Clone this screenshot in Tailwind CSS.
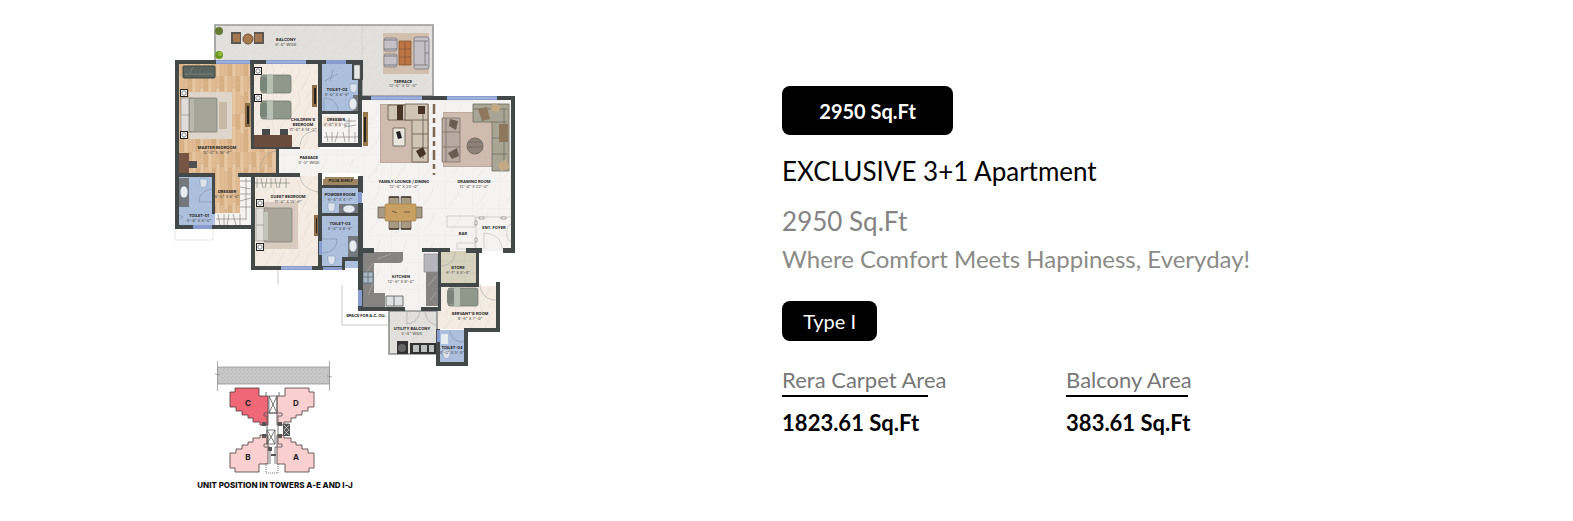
<!DOCTYPE html>
<html lang="en">
<head>
<meta charset="utf-8">
<meta name="viewport" content="width=device-width, initial-scale=1">
<title>Exclusive 3+1 Apartment</title>
<script src="https://cdn.jsdelivr.net/npm/@tailwindcss/browser@4"></script>
</head>
<body class="bg-white font-['Lato',sans-serif] text-black">
<main class="grid grid-cols-[44%_1fr]">
<figure class="flex justify-center pt-[15px] pr-0.5 pb-6">
<svg class="w-[360px] max-w-full h-auto font-['Inter',sans-serif]" viewBox="165 15 360 480" role="img" aria-label="Floor plan of the 3+1 apartment">
<defs>
<pattern id="wood" width="16" height="38" patternUnits="userSpaceOnUse"><path fill="#e0bb93" d="M0 0h16v38H0z"/><path fill="#e8c7a3" d="M0 0h4v20H0zM8 12h4v26H8z"/><path fill="#d8b084" d="M4 16h4v22H4zM12 0h4v15h-4z"/><path stroke="#d0a67b" stroke-width=".4" d="M0 0v38M4 0v38M8 0v38M12 0v38M0 20h4M8 12h4M4 16h4M12 15h4"/></pattern>
<pattern id="cream" width="26" height="30" patternUnits="userSpaceOnUse"><path fill="#f4ebe2" d="M0 0h26v30H0z"/><path stroke="#ebdfd3" fill="none" stroke-width=".8" d="M2 30 14 12 12 0M16 30l8-18M20 8l6-8M4 14l4-8"/></pattern>
<pattern id="marble" x="364" y="100" width="27" height="27" patternUnits="userSpaceOnUse"><path fill="#f4f3f1" d="M0 0h27v27H0z"/><path stroke="#e3e2df" fill="none" stroke-width=".5" d="M0 0h27M0 0v27M4 25l9-11 3-9"/></pattern>
<pattern id="stone" width="20" height="18" patternUnits="userSpaceOnUse"><path fill="#e2e0dc" d="M0 0h20v18H0z"/><path stroke="#dbd9d4" fill="none" stroke-width=".8" d="m2 14 6-7 5-3M12 17l6-6"/></pattern>
<pattern id="blue" width="12" height="12" patternUnits="userSpaceOnUse"><path fill="#acc0dd" d="M0 0h12v12H0z"/><path stroke="#a1b7d8" fill="none" stroke-width=".6" d="m1 9 4-4 5-2M7 12l4-4"/></pattern>
<pattern id="road" width="4" height="4" patternUnits="userSpaceOnUse"><path fill="#c8c8c8" d="M0 0h4v4H0z"/><path fill="#bcbcbc" d="M0 0h1v1H0zM2 2h1v1H2zM3 1h1v1H3z"/></pattern>
<g id="sidebed"><rect x="0" y="0" width="30" height="18" rx="2" fill="#8f988b" stroke="#69706a" stroke-width=".7"/><rect x="-1" y="2" width="7" height="14" rx="2" fill="#7b867b"/><path fill="#b7c1b3" d="M6-1h6v20H6z"/></g>
<g id="lamp"><path fill="#222" d="M0 0h8v8H0z"/><path fill="#fff" d="M1 1h6v6H1z"/><circle cx="4" cy="4" r="2.2" fill="#fff" stroke="#555" stroke-width=".7"/></g>
<g id="wc"><path fill="#dce5ee" stroke="#8195ae" stroke-width=".5" d="M0 0h7v4c0 6-7 6-7 0z"/></g>
<g id="chair"><path fill="#a89b86" stroke="#5c5040" stroke-width=".7" d="M0 0h10v8H0z"/><path stroke="#45392c" stroke-width="1.5" d="M0 0h10"/></g>
<g id="seat"><rect width="13" height="13" rx="2" fill="#c4c1c6" stroke="#77747a" stroke-width=".7"/><path stroke="#77747a" stroke-width=".9" d="M0 2h13M0 11h13"/></g>
</defs>

<!-- floors -->
<path fill="url(#stone)" stroke="#969898" stroke-width="1.6" d="M215 25h218v71h-71V62H215z"/>
<path stroke="#bdbbb7" stroke-width=".5" stroke-dasharray="1 1" d="M362 26v36"/>
<path fill="url(#wood)" d="M177 62h76v86h25v27h-37v38h-27v-38h-37z"/>
<path fill="url(#cream)" d="M253 62h67v114h-67z"/><path fill="url(#cream)" d="M253 175h67v93h-67z"/>
<path fill="url(#marble)" d="M278 149h84v24h-42v3h-41z"/><path fill="url(#marble)" d="M360 98h153v153H360z"/>
<path fill="url(#wood)" d="M253 149h25v24h-25z"/>
<path fill="url(#blue)" d="M177 175h38v52h-38zM320 62h40v52h-40zM320 187h41v81h-41zM439 330h27v34h-27z"/>
<path fill="#f5f4f2" d="M215 213h25v-38h13v52h-38zM320 114h40v31h-40z"/>
<path fill="#f0e5da" d="M323 116h18v11h-18z"/>
<path fill="url(#marble)" d="M360 251h80v59h-80z"/>
<path fill="#d6d2bd" d="M440 251h37v34h-37z"/><path stroke="#c9c5b0" stroke-width=".4" d="M440 261h37M440 273h37M452 251v34M465 251v34"/>
<path fill="url(#cream)" d="M438 286h60v43h-60z"/>
<path fill="url(#stone)" stroke="#8e9090" stroke-width="1.6" d="M389 311h48v43h-48z"/>

<!-- balcony and terrace furniture -->
<g fill="#6b9a22"><circle cx="219" cy="31" r="4" fill="#667a33"/><circle cx="219" cy="55" r="4"/><circle cx="220" cy="54" r="2" fill="#98bd35"/></g>
<path fill="#5f5751" d="M231 32h10v12h-10zM254 32h10v12h-10z"/><path fill="#a37850" d="M233 34h7v8h-7zM255 34h7v8h-7z"/><circle cx="248" cy="39" r="5" fill="#a9794f" stroke="#6e5135"/>
<path fill="#d3bfae" d="M383 33h46v41h-46z"/><path fill="#bb7545" stroke="#8c5633" stroke-width=".8" d="M399 41h12v24h-12zM405 41v24M399 49h12M399 57h12"/>
<use href="#seat" x="384" y="38"/><use href="#seat" x="384" y="54"/>
<rect x="414" y="37" width="15" height="32" rx="2" fill="#c4c1c6" stroke="#77747a" stroke-width=".8"/><path stroke="#77747a" fill="none" stroke-width=".8" d="M414 41h14M414 65h14M425 41v24M425 53h4"/>

<!-- master bedroom -->
<rect x="183" y="66" width="32" height="12" rx="1" fill="#59645f" stroke="#39423e"/><path stroke="#7d8883" stroke-width=".8" d="M185 74h28M193 67l-3 6"/>
<path fill="#ded6cb" d="M189 92h43v47h-43z"/><rect x="219" y="102" width="8" height="27" fill="#c8b9a6"/>
<path fill="#deddda" stroke="#96948f" stroke-width=".7" d="M181 98h11v34h-11zM181 115h11"/><rect x="189" y="98" width="28" height="34" rx="1" fill="#a5a599" stroke="#7a7b70" stroke-width=".7"/><path fill="#b8b8ab" d="M190 99h4v32h-4z"/>
<use href="#lamp" x="180" y="89"/><use href="#lamp" x="180" y="131"/>
<path fill="#8c6d45" d="M245 103h5v24h-5z"/><path fill="#26221e" d="M247 106h2v18h-2z"/>
<path fill="#785543" d="M179 153h10v20h-10z"/><path fill="#4f5051" d="M189 161h8v7h-8z"/>

<!-- children's bedroom -->
<use href="#sidebed" x="261" y="75"/><use href="#sidebed" x="261" y="101"/><use href="#lamp" x="254" y="67"/><use href="#lamp" x="254" y="94"/>
<path fill="#8c6d45" d="M312 85h5v22h-5z"/><path fill="#26221e" d="M314 88h2v16h-2z"/>
<path fill="#6b4c3c" d="M254 135h38v12h-38z"/><path fill="#474849" d="M262 129h8v6h-8zM280 129h8v6h-8z"/>

<!-- guest bedroom -->
<path fill="#d9cbc0" d="M264 202h34v47h-34z"/><path fill="#e1dfda" stroke="#9a9792" stroke-width=".7" d="M256 208h11v33h-11zM256 225h11"/><rect x="264" y="208" width="28" height="34" rx="1" fill="#aaa79a" stroke="#807e73" stroke-width=".7"/><path fill="#c3c5bb" d="M264 212h4v28h-4z"/>
<use href="#lamp" x="256" y="199"/><use href="#lamp" x="256" y="243"/>
<path fill="#8c6d45" d="M314 215h4v21h-4z"/><path fill="#26221e" d="M316 218h1v15h-1z"/>

<!-- wardrobes -->
<g stroke="#777" stroke-width=".6" fill="none"><path d="M254 183h36M257 178v10M261 178l2 10M267 178l-2 10M271 178v10M275 178l2 10M281 178l-2 10M286 178v10M246 178v42M240 181h11M240 187l11 2M240 194h11M240 201l11-3M240 207h11M216 219h30M218 214l2 11M224 214v11M229 214l-2 11M233 214l3 11M240 214v11M324 137h34M326 132l2 10M332 132v10M338 132l-3 10M343 132l2 10M349 118v24M344 121h12M344 127l12-2M355 132v10"/></g>

<!-- bathrooms -->
<path fill="#74777c" d="M179 178h10v29h-10zM353 95h8v17h-8zM339 204h20v9h-20zM348 236h10v22h-10z"/>
<g fill="#e6ebf0" stroke="#6f7f95" stroke-width=".6"><ellipse cx="184" cy="192" rx="4" ry="6"/><ellipse cx="353" cy="104" rx="4" ry="6"/><ellipse cx="349" cy="209" rx="6" ry="4"/><ellipse cx="353" cy="246" rx="4" ry="6"/></g>
<use href="#wc" x="200" y="179"/><use href="#wc" x="350" y="84"/><use href="#wc" x="328" y="203"/><use href="#wc" x="328" y="256"/><use href="#wc" x="443" y="350"/><path fill="#e6ebf0" d="M441 334h7v10h-7z"/>
<g fill="none" stroke="#788daf" stroke-width=".6"><path d="M214 189c-9 0-15 5-15 13h15M338 112c0-8-5-14-14-14v14M322 239h15c0 8-5 14-15 14M179 215l4 2-3 2M333 70l-3 11M325 81l12-7M450 330c0 7 5 12 14 12"/></g>

<!-- lounge -->
<path fill="#bda99b" d="M380 104h49v59h-49zM443 112h60v55h-60z"/><path fill="#cfbcae" d="M381 105h47v57h-47zM444 113h58v53h-58z"/>
<g fill="#d0c4b3" stroke="#62574c" stroke-width=".8"><path d="M388 105h22v15h-22z"/><path d="M405 104h23v58h-16v-42h-7z"/><path d="M412 120h16M412 134h16M412 148h16M423 107v52"/></g>
<path fill="#493528" d="M397 105h6v15h-6zM418 106h7v8h-7zM416 151l7-4 3 7-6 4z"/><path fill="#eae5dd" stroke="#51483f" stroke-width=".7" d="M393 128h12v18h-12z"/><path fill="#222" d="m396 132 4-1 2 7-4 1z"/>
<g fill="#b8aaa0" stroke="#766a61" stroke-width=".7"><path d="M442 118h18v44h-18zM446 118v44M442 132h18M442 147h18"/></g><path fill="#6b5d51" d="m450 119 8 2-2 9-7-4zM448 153l9-5 2 8-7 3z"/>
<path fill="#a9a595" stroke="#6f6c60" stroke-width=".8" d="M473 104h36v67h-17v-49h-19zM473 109h34M492 122h15M492 138h15M492 154h15M504 109v58"/><path fill="#8e785d" d="m478 109 9-2 3 12-8 2zM499 124h9v18h-9z"/><path fill="#c5a985" d="m498 164 8-5 4 9-9 3zM493 103l8 3-3 7-7-3z"/>
<circle cx="475" cy="146" r="8" fill="#8d8178" stroke="#756a62"/><path stroke="#655b53" stroke-width=".6" d="M469 142h12M468 147h14"/>
<path stroke="#7b6a53" stroke-width="2.5" stroke-dasharray="10 4 5 4" d="M434 104v71"/>
<path fill="#967749" d="M363 112h5v34h-5z"/><path fill="#29241d" d="M364 117h2v25h-2z"/>
<path fill="#a08660" d="M323 179h2v-2h29v2h4v6h-35z"/>
<use href="#chair" x="389" y="197"/><use href="#chair" x="401" y="197"/><g transform="rotate(180 400 213)"><use href="#chair" x="389" y="197"/><use href="#chair" x="401" y="197"/></g>
<path fill="#a89b86" stroke="#5c5040" stroke-width=".7" d="M378 207h8v11h-8zM414 207h8v11h-8z"/><rect x="385" y="204" width="31" height="17" rx="1" fill="#c9a064" stroke="#a88247" stroke-width=".7"/><path stroke="#5d4827" stroke-width=".8" d="m392 211 5 2M404 212h6"/>
<g fill="none" stroke="#c3c3c0" stroke-width=".7"><path d="M447 216h28v11h-28zM457 243h18v6h-18zM484 249v-16c11 0 18 7 18 16M512 224c-7 0-7 18 0 18M476 217h36M476 217v31"/><path fill="#fff" stroke="#888" d="M479 217h5v2h-5zM501 217h5v2h-5zM475 221h2v4h-2zM475 238h2v4h-2z"/></g>

<!-- kitchen and service rooms -->
<path fill="#858483" d="M363 252h40v7q0 4-4 4h-25v30h11v14h-22zM426 272h12v34h-12z"/><path stroke="#a4a3a1" stroke-width="1" fill="none" d="m365 275 8-12M368 295l5-12M377 259l14-5M428 286l8-10M430 300l6-7"/>
<path fill="#b5b5bb" stroke="#85858b" stroke-width=".6" d="M424 254h14v18h-14z"/><path fill="#acb9c2" stroke="#556774" stroke-width=".7" d="M363 272h10v11h-10zM363 277h10M368 272v11"/><path fill="#dfe1e2" stroke="#555" stroke-width=".8" d="M386 296h17v10h-17zM394 296v10"/>
<use href="#sidebed" x="448" y="288"/><path fill="#333" d="M397 341h11v13h-11zM410 343h26v11h-26z"/><circle cx="402" cy="348" r="4" fill="#666"/><path fill="#bec0c0" d="M413 345h6v7h-6zM421 345h6v7h-6zM429 345h5v7h-5z"/>
<g fill="none" stroke="#a5a5a2" stroke-width=".6"><path d="M407 311v13c8-1 12-6 13-13M425 311c1 8 5 13 12 14M455 252c0 8-5 13-14 14M480 284c0 9 6 16 16 16M300 145c1-9 7-14 17-14M276 151c-9 2-14 8-16 17M300 176c1 9 8 14 18 16M342 285v40h47M278 270v14"/><path stroke="#d6d6d4" d="M175 229v11h38v-11"/></g>

<!-- walls -->
<path fill="#434848" d="M175 60h41v4h-37v109h36v4h-36v48h14v4h-18zM212 177h3v37h-3zM212 225h43v4h-43zM250 60h16v4h-12v83h46v2h-49zM238 173h62v4h-45v89h26v4h-30v-93h-13zM276 149h3v24h-3zM306 60h20v4h-4v83h-4V64h-12zM318 173h4v81h-4zM318 254h4v16h-10v-4h6zM322 111h38v3h-38zM322 143h38v4h-38zM322 185h38v3h-38zM322 213h38v3h-38zM346 60h17v20h-1v67h-4V80h-6V64h-6zM322 266h20v-9h18v4h-15v9h-23zM358 176h5v17h-5zM358 203h5v50h-5zM363 248h11v5h-11zM358 96h13v4h-13zM422 96h25v4h-25zM497 96h18v157h-12v-5h8V100h-14zM422 248h28v4h-9v59h-20v-4h17v-55h-16zM466 248h16v5h-3v34h-39v-4h36v-30h-10zM358 248h5v59h42v4h-47zM496 282h4v50h-32v34h-32v-37h4v33h24v-34h32z"/>
<path fill="#889cd0" d="M216 60h34v4h-34zM266 60h40v4h-40zM326 60h20v4h-20zM371 96h51v4h-51zM447 96h50v4h-50zM193 225h19v4h-19zM281 266h31v4h-31zM319 241h3v14h-3zM323 267h19v3h-19zM358 192h4v11h-4zM358 290h4v16h-4zM437 330h3v12h-3z"/>
<path stroke="#d7dff0" stroke-width=".6" d="M216 62h34M266 62h40M371 98h51M447 98h50M281 268h31"/>
<path fill="#e8e8e6" stroke="#666" stroke-width=".5" d="M354 65h6v14h-6z"/>

<!-- room labels -->
<g class="text-[4px] font-bold" fill="#222" text-anchor="middle">
<text x="286" y="41">BALCONY</text><text x="403" y="83">TERRACE</text><text x="217" y="149">MASTER BEDROOM</text><text x="303" y="121">CHILDREN'S</text><text x="303" y="126">BEDROOM</text><text x="337" y="91">TOILET-02</text><text x="336" y="121">DRESSER</text><text x="309" y="159">PASSAGE</text><text x="404" y="183">FAMILY LOUNGE / DINING</text><text x="474" y="183">DRAWING ROOM</text><text x="227" y="193">DRESSER</text><text x="199" y="217">TOILET-01</text><text x="288" y="198">GUEST BEDROOM</text><text x="341" y="182">PUJA SHELF</text><text x="340" y="196">POWDER ROOM</text><text x="340" y="225">TOILET-03</text><text x="463" y="235">BAR</text><text x="494" y="229">ENT. FOYER</text><text x="401" y="278">KITCHEN</text><text x="458" y="269">STORE</text><text x="366" y="317">SPACE FOR A.C. OU.</text><text x="412" y="330">UTILITY BALCONY</text><text x="470" y="315">SERVANT'S ROOM</text><text x="452" y="349">TOILET-04</text>
</g>
<g class="text-[4px]" fill="#444" text-anchor="middle">
<text x="286" y="46">6'-0" WIDE</text><text x="403" y="87">12'-0" X 12'-0"</text><text x="217" y="154">12'-0" X 18'-4"</text><text x="303" y="131">11'-0" X 14'-2"</text><text x="337" y="96">5'-0" X 8'-6"</text><text x="336" y="126">5'-0" X 5'-0"</text><text x="309" y="164">4'-0" WIDE</text><text x="404" y="188">12'-0" X 25'-0"</text><text x="474" y="188">12'-0" X 22'-0"</text><text x="227" y="198">6'-0" X 8'-0"</text><text x="199" y="222">6'-8" X 8'-0"</text><text x="288" y="203">11'-0" X 15'-6"</text><text x="340" y="201">6'-4" X 4'-7"</text><text x="340" y="230">5'-0" X 8'-5"</text><text x="401" y="283">12'-6" X 9'-0"</text><text x="458" y="274">6'-1" X 5'-4"</text><text x="412" y="335">5'-0" WIDE</text><text x="470" y="320">9'-6" X 7'-0"</text><text x="452" y="354">4'-0" X 5'-5"</text>
</g>

<!-- tower key plan -->
<path fill="url(#road)" d="M217 367h113v17H217z"/><path stroke="#888" stroke-width=".7" fill="none" d="M217 367h113M217 384h113M217.500 361v30M329.500 361v30M215 374l5 1M327 376l5 1"/>
<g stroke="#4b3b3e" stroke-width=".8"><path fill="#f06878" d="M230 392h5v-4h24v8h9v29h-8v-3h-7v-4h-5v-3h-6v-4h-6v-4h-6z"/><path fill="#f9cfd0" d="M314 392h-5v-4h-24v8h-8v29h7v-3h7v-4h5v-3h6v-4h6v-4h6zM230 468h5v4h24v-8h9v-29h-8v3h-7v4h-5v3h-6v4h-6v4h-6zM314 468h-5v4h-24v-8h-8v-29h7v3h7v4h5v3h6v4h6v4h6z"/></g>
<g fill="none" stroke="#555" stroke-width=".8"><path d="M269 396v17h8v-17zM269 396l8 17M277 396l-8 17M264 413h18v3h-4v14M264 413v3h3v28h-3v3h6v17M267 430h8v14h-8zM267 430l8 14M275 430l-8 14M283 424h6M283 435h6M278 430v14h4v3h-7v17M266 392v4M279 392v4"/><path stroke-dasharray="1 1" d="M266 463v10h12v-10"/></g>
<path fill="#555" d="M262 422h4v4h-4zM278 422h4v4h-4zM262 434h4v4h-4zM278 434h4v4h-4zM271 454h5v2h-5zM268 447h4v4h-4zM283 424h7v12h-7z"/><path stroke="#ddd" stroke-width=".7" d="m284 425 5 5M289 425l-5 5M284 430l5 5M289 430l-5 5"/>
<g class="text-[8px] font-bold" fill="#222" text-anchor="middle"><text x="248" y="406">C</text><text x="296" y="406">D</text><text x="248" y="460">B</text><text x="296" y="460">A</text></g>
<text class="text-[8px] font-extrabold" fill="#111" x="275" y="488" text-anchor="middle">UNIT POSITION IN TOWERS A-E AND I-J</text>
</svg>
</figure>
<section class="flex flex-col items-start pl-[90px] pt-[86px]">
<button type="button" class="rounded-lg bg-black h-[49px] w-[171px] text-xl font-bold text-white whitespace-nowrap">2950 Sq.Ft</button>
<h1 class="mt-[18px] text-[26px] leading-9">EXCLUSIVE 3+1 Apartment</h1>
<p class="mt-[14px] text-[26px] leading-9 text-[#858383]">2950 Sq.Ft</p>
<p class="mt-0.5 text-2xl leading-9 text-[#8b8b87]">Where Comfort Meets Happiness, Everyday!</p>
<button type="button" class="mt-6 rounded-lg bg-black h-10 w-[95px] text-xl text-white whitespace-nowrap">Type I</button>
<dl class="mt-6 grid grid-cols-[284px_auto]">
<div><dt class="text-[22px] leading-[30px] text-[#777] after:block after:h-0.5 after:w-[146px] after:bg-black">Rera Carpet Area</dt><dd class="mt-2 text-[22px] leading-9 font-bold">1823.61 Sq.Ft</dd></div>
<div><dt class="text-[22px] leading-[30px] text-[#777] after:block after:h-0.5 after:w-[122px] after:bg-black">Balcony Area</dt><dd class="mt-2 text-[22px] leading-9 font-bold">383.61 Sq.Ft</dd></div>
</dl>
</section>
</main>
</body>
</html>
